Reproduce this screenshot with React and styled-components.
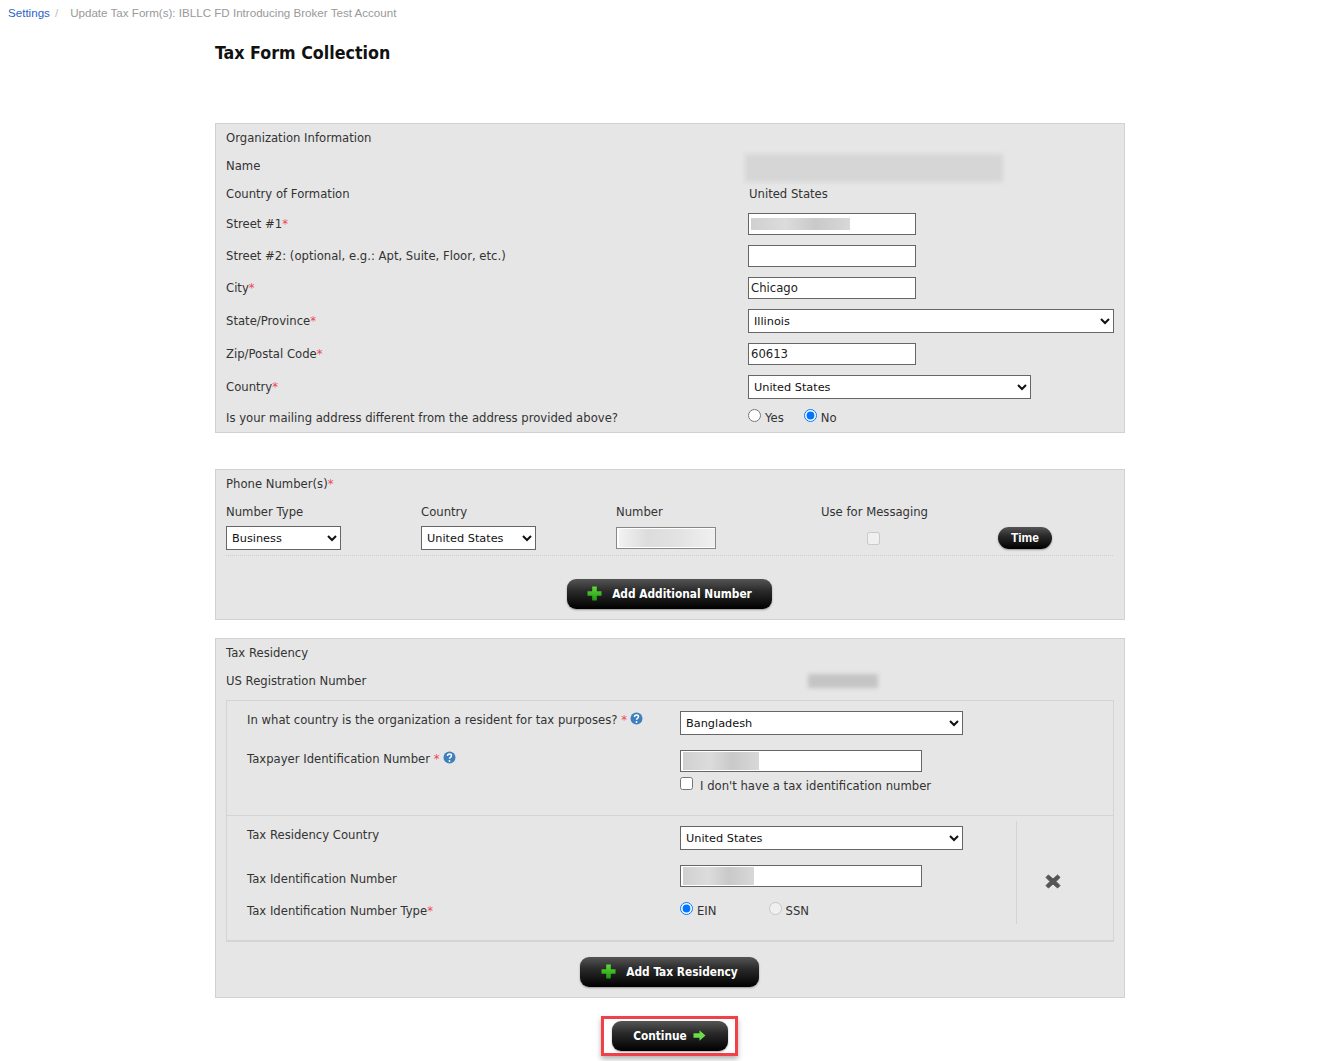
import React from 'react';
import styled, { createGlobalStyle } from 'styled-components';

const BODY_FONT = '"DejaVu Sans", Verdana, sans-serif';
const BOLD_FONT = '"DejaVu Sans Condensed", "DejaVu Sans", Verdana, sans-serif';

const GlobalStyle = createGlobalStyle`
  body {
    margin: 0;
    background: #fff;
    color: #333;
    font-family: ${BODY_FONT};
    font-size: 11.65px;
  }
`;

const Breadcrumb = styled.div`
  display: flex;
  height: 24px;
  align-items: center;
  padding-left: 8px;
  font-family: "Liberation Sans", Arial, sans-serif;
  font-size: 11.6px;
  color: #999;
`;

const Crumb = styled.a`
  color: #2a62c8;
`;

const Slash = styled.span`
  color: #bbb;
  margin: 0 12px 0 5px;
`;

const Main = styled.main`
  width: 910px;
  margin-left: 215px;
`;

const Title = styled.h1`
  margin: 0;
  height: 99px;
  padding-top: 17px;
  box-sizing: border-box;
  font-family: ${BOLD_FONT};
  font-size: 17.7px;
  line-height: 24px;
  font-weight: 700;
  color: #111;
`;

const Panel = styled.section`
  box-sizing: border-box;
  background: #e6e6e6;
  border: 1px solid #d2d2d2;
  margin-bottom: ${({ $gap }) => $gap || 0}px;
  padding-bottom: ${({ $pad }) => $pad || 0}px;
`;

const Row = styled.div`
  display: grid;
  grid-template-columns: 522px 1fr;
  grid-auto-rows: ${({ $h }) => $h || 28}px;
  align-items: center;
  height: ${({ $h }) => $h || 28}px;
  padding-left: 10px;
`;

const Value = styled.div`
  display: flex;
  align-items: center;
  margin-left: ${({ $shift }) => $shift || 0}px;
`;

const Req = styled.span`
  color: #f0475a;
`;

const Smudge = styled.div`
  width: ${({ $w }) => $w}px;
  height: ${({ $h }) => $h}px;
  transform: translateY(${({ $down }) => $down || 0}px);
  background: ${({ $tone }) => $tone || '#d6d6d6'};
  filter: blur(${({ $blur }) => $blur || 1.5}px);
`;

const smudgeFill = ({ $smudge, $smudgeH, $soft }) => {
  if (!$smudge) return '#fff';
  const stops = $soft
    ? '#f2f2f2, #dcdcdc 30%, #e2e2e2 60%, #f0f0f0'
    : '#d0d0d0, #dcdcdc 35%, #c9c9c9 65%, #d8d8d8';
  return `linear-gradient(90deg, ${stops}) 2px center / ${$smudge}px ${$smudgeH || 12}px no-repeat #fff`;
};

const TextInput = styled.input`
  display: block;
  box-sizing: border-box;
  width: ${({ $w }) => $w || 168}px;
  height: 22px;
  margin: 0;
  padding: 0 2px;
  border: 1px solid ${({ $soft }) => ($soft ? '#888' : '#666')};
  border-radius: 0;
  color: #222;
  font: 11.65px ${BODY_FONT};
  background: ${smudgeFill};
`;

const Select = styled.select`
  display: block;
  box-sizing: border-box;
  width: ${({ $w }) => $w}px;
  height: 24px;
  margin: 0;
  padding: 0 1px;
  border: 1px solid #666;
  border-radius: 0;
  background: #fff;
  color: #111;
  font: 11.3px ${BODY_FONT};
`;

const Choice = styled.label`
  display: inline-flex;
  align-items: center;
  margin-right: ${({ $gap }) => $gap || 0}px;
`;

const Radio = styled.input.attrs({ type: 'radio' })`
  width: 13px;
  height: 13px;
  margin: -5px 4px 0 0;
`;

const PhoneGrid = styled.div`
  display: grid;
  grid-template-columns: 195px 195px 205px 177px 1fr;
  margin: 0 11px 0 10px;
  padding-bottom: 5px;
  border-bottom: 1px dotted #ccc;
  align-items: center;
`;

const ColHead = styled.div`
  height: 28px;
  line-height: 28px;
`;

const SmallCheck = styled.input.attrs({ type: 'checkbox' })`
  width: 13px;
  height: 13px;
  margin: 0 0 0 46px;
`;

const DarkButton = styled.button`
  display: inline-flex;
  align-items: center;
  justify-content: center;
  box-sizing: border-box;
  width: ${({ $w }) => $w}px;
  height: ${({ $h }) => $h || 30}px;
  gap: ${({ $gap }) => $gap || 10}px;
  border: 0;
  border-radius: 9px;
  background: linear-gradient(#555, #2a2a2a 40%, #000);
  box-shadow: 0 1px 2px rgba(0, 0, 0, 0.35);
  color: #fff;
  font: 700 11.8px ${BOLD_FONT};
  padding: 0;
`;

const TimeButton = styled(DarkButton)`
  border-radius: 11px;
  font-family: "Liberation Sans", Arial, sans-serif;
  font-size: 12px;
`;

const ButtonRow = styled.div`
  display: flex;
  justify-content: center;
  padding: ${({ $top }) => $top}px 1px 0 0;
`;

const InnerBox = styled.div`
  margin: 5px 10px 0;
  border: 1px solid #d4d4d4;
  border-bottom-width: 2px;
`;

const TaxBlock = styled.div`
  display: grid;
  grid-template-columns: 433px 1fr;
  align-items: start;
  padding: 10px 0 0 20px;
  height: ${({ $h }) => $h}px;
  box-sizing: border-box;
`;

const TaxLabel = styled.div`
  display: flex;
  align-items: center;
  gap: 3px;
  height: ${({ $h }) => $h}px;
  margin-top: ${({ $top }) => $top || 0}px;
`;

const HelpIcon = styled.svg`
  margin-top: -3px;
`;

const PlusIcon = styled.svg`
  margin-top: -1px;
`;

const ArrowIcon = styled.svg`
  margin-top: -1px;
`;

const FieldStack = styled.div`
  display: flex;
  flex-direction: column;
  align-items: flex-start;
`;

const Spaced = styled.div`
  margin-top: ${({ $top }) => $top}px;
`;

const NoTinRow = styled.label`
  display: flex;
  align-items: center;
  margin-top: 6px;
  height: 16px;
`;

const NoTinCheck = styled.input.attrs({ type: 'checkbox' })`
  width: 13px;
  height: 13px;
  margin: -5px 7px 0 0;
`;

const ResidencyRow = styled.div`
  display: grid;
  grid-template-columns: 790px 1fr;
  border-top: 1px solid #d4d4d4;
  height: 124px;
`;

const ResidencyFields = styled.div`
  border-right: 1px solid #d4d4d4;
  height: 103px;
  margin-top: 5px;
`;

const ResidencyInner = styled(TaxBlock)`
  padding-top: 5px;
`;

const RemoveCell = styled.div`
  display: flex;
  align-items: center;
  justify-content: center;
  box-sizing: border-box;
  height: 124px;
  padding: 6px 24px 0 0;
`;

const HighlightBox = styled.div`
  box-sizing: border-box;
  width: 137px;
  height: 40px;
  border: 3px solid #f0404a;
  display: flex;
  align-items: center;
  justify-content: center;
  box-shadow: 0 3px 5px rgba(0, 0, 0, 0.3);
`;

const ContinueRow = styled.div`
  display: flex;
  justify-content: center;
  padding: 18px 0 5px;
  margin-left: -1px;
`;

const Plus = () => (
  <PlusIcon width="15" height="15" viewBox="0 0 15 15">
    <defs>
      <linearGradient id="plusFill" x1="0" y1="0" x2="0" y2="1">
        <stop offset="0" stopColor="#62d83a" />
        <stop offset="1" stopColor="#1d9a12" />
      </linearGradient>
    </defs>
    <path d="M5.2 0.5h4.6v4.7h4.7v4.6H9.8v4.7H5.2V9.8H0.5V5.2h4.7z" fill="url(#plusFill)" />
  </PlusIcon>
);

const Arrow = () => (
  <ArrowIcon width="13" height="11" viewBox="0 0 13 11">
    <path d="M0.5 3.2h6V0.3l6 5.2-6 5.2V7.8h-6z" fill="#6bdc4a" />
  </ArrowIcon>
);

const Help = () => (
  <HelpIcon width="13" height="13" viewBox="0 0 13 13">
    <circle cx="6.5" cy="6.5" r="6" fill="#3d80bd" />
    <path d="M4.5 5c0-1.2.9-1.9 2-1.9s2 .7 2 1.7c0 1.5-2 1.5-2 3" fill="none" stroke="#fff" strokeWidth="1.5" />
    <circle cx="6.5" cy="10" r="0.9" fill="#fff" />
  </HelpIcon>
);

const RemoveIcon = () => (
  <svg width="16" height="15" viewBox="0 0 16 15">
    <path d="M1 3.4 3.4 1 8 5 12.6 1 15 3.4 11 7.5 15 11.6 12.6 14 8 10 3.4 14 1 11.6 5 7.5z" fill="#555" stroke="#555" strokeLinejoin="round" />
  </svg>
);

const App = () => (
  <>
    <GlobalStyle />
    <Breadcrumb>
      <Crumb>Settings</Crumb>
      <Slash>/</Slash>
      Update Tax Form(s): IBLLC FD Introducing Broker Test Account
    </Breadcrumb>
    <Main>
      <Title>Tax Form Collection</Title>

      <Panel $gap={36}>
        <Row>Organization Information</Row>
        <Row>
          Name
          <Value $shift={-3}><Smudge $w={258} $h={28} $down={2} $blur={2} /></Value>
        </Row>
        <Row>
          Country of Formation
          <Value $shift={1}>United States</Value>
        </Row>
        <Row $h={32}>
          <span>Street #1<Req>*</Req></span>
          <Value><TextInput $smudge={99} readOnly /></Value>
        </Row>
        <Row $h={32}>
          Street #2: (optional, e.g.: Apt, Suite, Floor, etc.)
          <Value><TextInput readOnly /></Value>
        </Row>
        <Row $h={32}>
          <span>City<Req>*</Req></span>
          <Value><TextInput value="Chicago" readOnly /></Value>
        </Row>
        <Row $h={34}>
          <span>State/Province<Req>*</Req></span>
          <Value>
            <Select $w={366} defaultValue="Illinois"><option>Illinois</option></Select>
          </Value>
        </Row>
        <Row $h={32}>
          <span>Zip/Postal Code<Req>*</Req></span>
          <Value><TextInput value="60613" readOnly /></Value>
        </Row>
        <Row $h={34}>
          <span>Country<Req>*</Req></span>
          <Value>
            <Select $w={283} defaultValue="United States"><option>United States</option></Select>
          </Value>
        </Row>
        <Row>
          Is your mailing address different from the address provided above?
          <Value>
            <Choice $gap={20}><Radio name="mailing" />Yes</Choice>
            <Choice><Radio name="mailing" defaultChecked />No</Choice>
          </Value>
        </Row>
      </Panel>

      <Panel $gap={18} $pad={10}>
        <Row>
          <span>Phone Number(s)<Req>*</Req></span>
        </Row>
        <PhoneGrid>
          <ColHead>Number Type</ColHead>
          <ColHead>Country</ColHead>
          <ColHead>Number</ColHead>
          <ColHead>Use for Messaging</ColHead>
          <ColHead />
          <Select $w={115} defaultValue="Business"><option>Business</option></Select>
          <Select $w={115} defaultValue="United States"><option>United States</option></Select>
          <TextInput $w={100} $smudge={96} $smudgeH={18} $soft readOnly />
          <SmallCheck disabled />
          <TimeButton $w={54} $h={22}>Time</TimeButton>
        </PhoneGrid>
        <ButtonRow $top={23}>
          <DarkButton $w={205}><Plus />Add Additional Number</DarkButton>
        </ButtonRow>
      </Panel>

      <Panel $gap={0} $pad={10}>
        <Row>Tax Residency</Row>
        <Row>
          US Registration Number
          <Value $shift={60}><Smudge $w={70} $h={14} $tone="#c4c4c4" $blur={2} /></Value>
        </Row>
        <InnerBox>
          <TaxBlock $h={114}>
            <FieldStack>
              <TaxLabel $h={16} $top={1}>
                <span>In what country is the organization a resident for tax purposes? <Req>*</Req></span>
                <Help />
              </TaxLabel>
              <TaxLabel $h={16} $top={23}>
                <span>Taxpayer Identification Number <Req>*</Req></span>
                <Help />
              </TaxLabel>
            </FieldStack>
            <FieldStack>
              <Select $w={283} defaultValue="Bangladesh"><option>Bangladesh</option></Select>
              <Spaced $top={15}><TextInput $w={242} $smudge={76} $smudgeH={18} readOnly /></Spaced>
              <NoTinRow><NoTinCheck />I don't have a tax identification number</NoTinRow>
            </FieldStack>
          </TaxBlock>
          <ResidencyRow>
            <ResidencyFields>
              <ResidencyInner $h={103}>
                <FieldStack>
                  <TaxLabel $h={16} $top={1}>Tax Residency Country</TaxLabel>
                  <TaxLabel $h={16} $top={28}>Tax Identification Number</TaxLabel>
                  <TaxLabel $h={16} $top={16}><span>Tax Identification Number Type<Req>*</Req></span></TaxLabel>
                </FieldStack>
                <FieldStack>
                  <Select $w={283} defaultValue="United States"><option>United States</option></Select>
                  <Spaced $top={15}><TextInput $w={242} $smudge={71} $smudgeH={18} readOnly /></Spaced>
                  <Spaced $top={17}>
                    <Choice $gap={52}><Radio name="tin" defaultChecked />EIN</Choice>
                    <Choice><Radio name="tin" disabled />SSN</Choice>
                  </Spaced>
                </FieldStack>
              </ResidencyInner>
            </ResidencyFields>
            <RemoveCell><RemoveIcon /></RemoveCell>
          </ResidencyRow>
        </InnerBox>
        <ButtonRow $top={15}>
          <DarkButton $w={179}><Plus />Add Tax Residency</DarkButton>
        </ButtonRow>
      </Panel>

      <ContinueRow>
        <HighlightBox>
          <DarkButton $w={116} $gap={6}>Continue<Arrow /></DarkButton>
        </HighlightBox>
      </ContinueRow>
    </Main>
  </>
);

export default App;
